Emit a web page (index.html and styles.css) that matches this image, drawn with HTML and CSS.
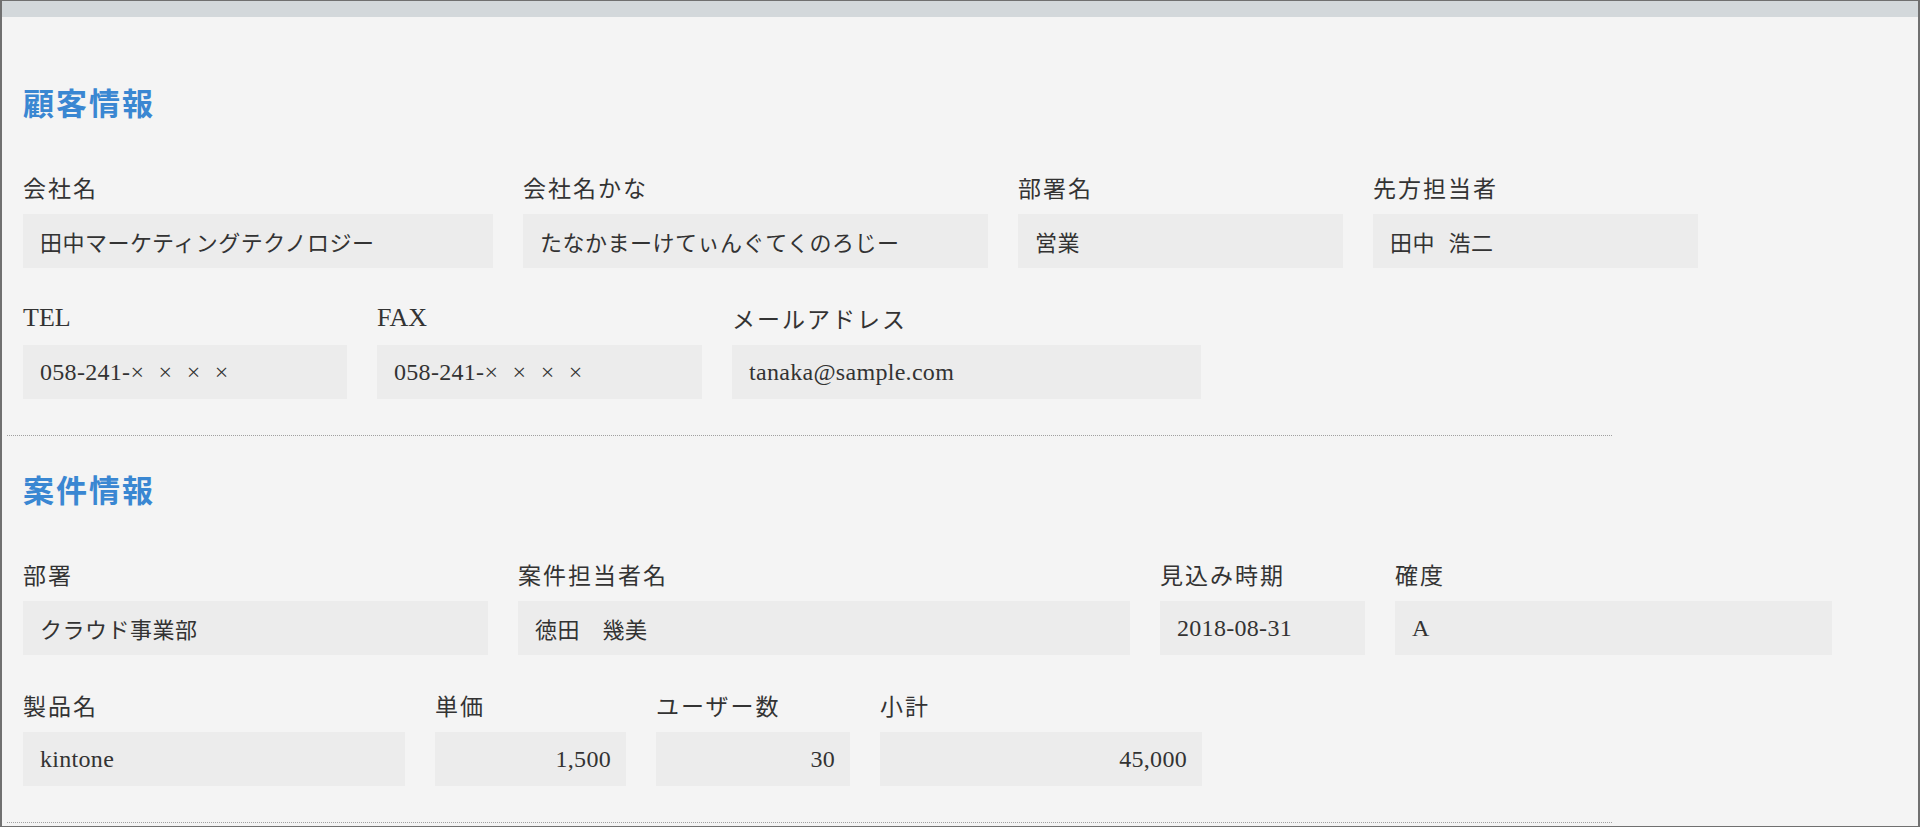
FILE: index.html
```html
<!DOCTYPE html>
<html lang="ja">

<head>
  <meta charset="UTF-8">
  <meta name="viewport" content="width=device-width, initial-scale=1.0">
  <title>顧客・案件情報</title>
  <link rel="stylesheet" href="styles.css">
</head>

<body>
  <div class="frame">
    <div class="top-bar"></div>

    <div class="content">
      <!-- 顧客情報 -->
      <div class="group">
        <h2 class="group-title">顧客情報</h2>
        <div class="row">
          <div class="field w470">
            <div class="label">会社名</div>
            <div class="value">田中マーケティングテクノロジー</div>
          </div>
          <div class="field w465">
            <div class="label">会社名かな</div>
            <div class="value">たなかまーけてぃんぐてくのろじー</div>
          </div>
          <div class="field w325">
            <div class="label">部署名</div>
            <div class="value">営業</div>
          </div>
          <div class="field w325">
            <div class="label">先方担当者</div>
            <div class="value">田中 浩二</div>
          </div>
        </div>
        <div class="row">
          <div class="field w324">
            <div class="label latin">TEL</div>
            <div class="value latin">058&#8209;241&#8209;× × × ×</div>
          </div>
          <div class="field w325">
            <div class="label latin">FAX</div>
            <div class="value latin">058&#8209;241&#8209;× × × ×</div>
          </div>
          <div class="field w469">
            <div class="label">メールアドレス</div>
            <div class="value latin">tanaka@sample.com</div>
          </div>
        </div>
      </div>

      <hr class="sep">

      <!-- 案件情報 -->
      <div class="group">
        <h2 class="group-title">案件情報</h2>
        <div class="row">
          <div class="field w465">
            <div class="label">部署</div>
            <div class="value">クラウド事業部</div>
          </div>
          <div class="field w612">
            <div class="label">案件担当者名</div>
            <div class="value">徳田　幾美</div>
          </div>
          <div class="field w205">
            <div class="label">見込み時期</div>
            <div class="value latin">2018-08-31</div>
          </div>
          <div class="field w437">
            <div class="label">確度</div>
            <div class="value latin">A</div>
          </div>
        </div>
        <div class="row">
          <div class="field w382">
            <div class="label">製品名</div>
            <div class="value latin">kintone</div>
          </div>
          <div class="field w191">
            <div class="label">単価</div>
            <div class="value latin num">1,500</div>
          </div>
          <div class="field w194">
            <div class="label">ユーザー数</div>
            <div class="value latin num">30</div>
          </div>
          <div class="field w322">
            <div class="label">小計</div>
            <div class="value latin num">45,000</div>
          </div>
        </div>
      </div>

      <hr class="sep">
    </div>
  </div>
</body>

</html>
```

FILE: styles.css
```css
* {
  padding: 0;
  margin: 0;
  box-sizing: border-box;
}

body {
  background-color: #f4f4f4;
  font-family: "Noto Sans CJK JP", sans-serif;
  color: #333;
}

.frame {
  height: 100vh;
  overflow: hidden;
  border: 1px solid #707070;
  border-left-width: 2px;
  border-right-width: 2px;
  background-color: #f4f4f4;
}

.top-bar {
  height: 16px;
  background-color: #d3d8db;
}

.content {
  padding-top: 32px;
}

.group {
  padding-left: 21px;
}

.group-title {
  margin-top: 36px;
  font-size: 31px;
  line-height: 34px;
  font-weight: bold;
  letter-spacing: 2px;
  color: #3a87d2;
}

.row {
  display: flex;
  gap: 30px;
  margin-top: 55px;
}

.row + .row {
  margin-top: 37px;
}

.label {
  height: 26px;
  margin-bottom: 14px;
  font-size: 23px;
  line-height: 26px;
  letter-spacing: 2px;
  white-space: nowrap;
}

.label.latin {
  font-family: "Liberation Serif", serif;
  font-size: 26px;
  letter-spacing: 0;
}

.value {
  height: 54px;
  display: flex;
  align-items: center;
  padding: 0 17px;
  background-color: #ececec;
  font-size: 22px;
  letter-spacing: 0.5px;
  word-spacing: 8px;
  white-space: nowrap;
}

.value.latin {
  font-family: "Liberation Serif", serif;
  font-size: 24px;
  letter-spacing: 0.3px;
  word-spacing: 8px;
}

.value.num {
  justify-content: flex-end;
  padding-right: 15px;
}

.sep {
  margin: 36px 0 0 5px;
  width: 1605px;
  height: 0;
  border: none;
  border-top: 1px dotted #a0a0a0;
}

/* フィールド幅 */
.w191 { width: 191px; }
.w194 { width: 194px; }
.w205 { width: 205px; }
.w322 { width: 322px; }
.w324 { width: 324px; }
.w325 { width: 325px; }
.w382 { width: 382px; }
.w437 { width: 437px; }
.w465 { width: 465px; }
.w469 { width: 469px; }
.w470 { width: 470px; }
.w612 { width: 612px; }
```
